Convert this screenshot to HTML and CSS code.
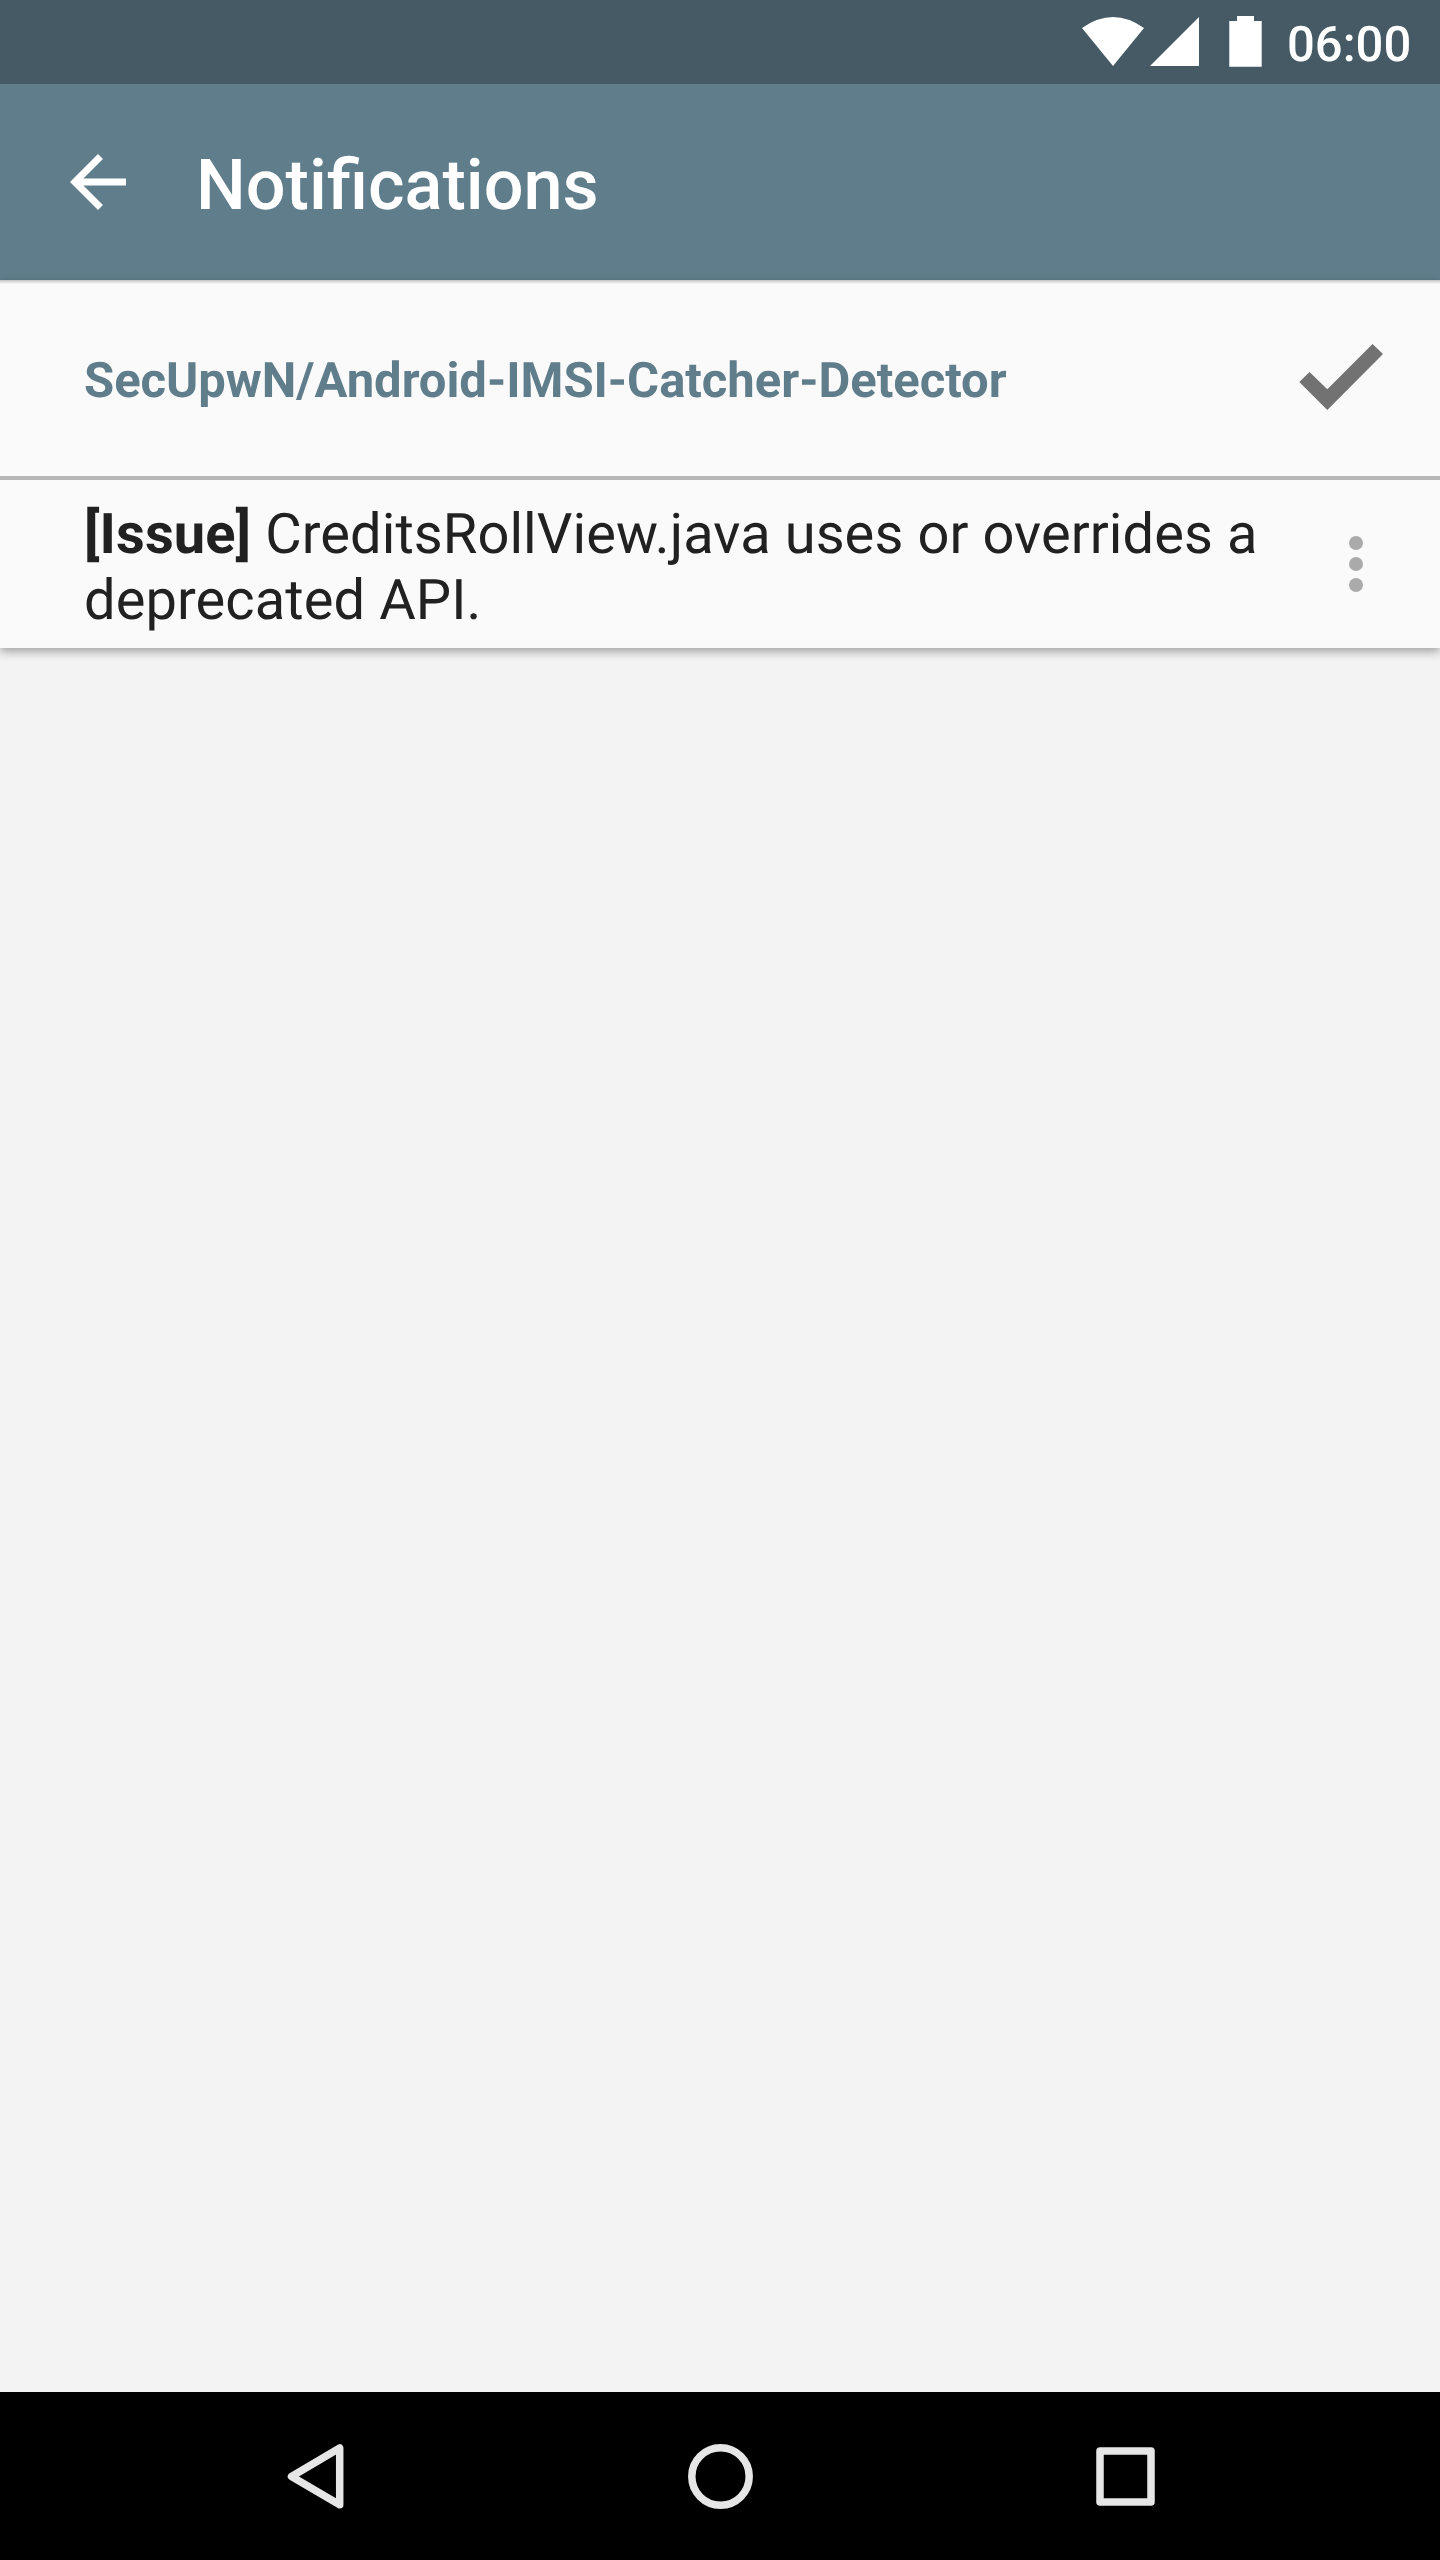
FILE: index.html
```html
<!DOCTYPE html>
<html lang="en"><head><meta charset="utf-8"><title>Notifications</title><link rel="stylesheet" href="styles.css"></head>
<body>
<div class="screen">
<div class="status">
<svg class="status-icons" width="190" height="84" viewBox="1078 0 190 84" fill="#fff"><path d="M1082 28Q1113 6 1144 28L1113 66Z"/><path d="M1150 66H1199V17Z"/><path d="M1229.300 66.700V21H1237V16H1254V21H1261.700V66.700Z"/></svg>
<span class="clock">06:00</span></div>
<header class="appbar">
<svg class="back" width="56" height="56" viewBox="4 4 16 16" fill="#fff"><path d="M20 11H7.830l5.590-5.590L12 4l-8 8 8 8 1.410-1.410L7.830 13H20z"/></svg>
<h1 class="title">Notifications</h1></header>
<main class="content">
<section class="group">
<div class="repo"><span class="repo-name">SecUpwN/Android-IMSI-Catcher-Detector</span>
<svg class="check" width="84" height="66" viewBox="0 0 84 66" fill="#727272"><path d="M0.300 38L10.500 28L28.300 45.300L73.500 0L84 10L28.300 66Z"/></svg></div>
<div class="item"><p class="item-text"><b>[Issue]</b> CreditsRollView.java uses or overrides a deprecated API.</p>
<svg class="more" width="14" height="56" viewBox="0 0 14 56" fill="#aaa"><circle cx="7" cy="7" r="7"/><circle cx="7" cy="28" r="7"/><circle cx="7" cy="49" r="7"/></svg></div>
</section></main>
<nav class="nav"><svg width="1440" height="168" viewBox="0 2392 1440 168" fill="none" stroke="#e6e6e6" stroke-width="7.500" stroke-linejoin="round"><path d="M339.700 2448V2504.800L291.500 2476.400Z"/><circle cx="720.500" cy="2476.500" r="28.700"/><rect x="1100" y="2451" width="51" height="51"/></svg></nav>
</div></body></html>
```
FILE: styles.css
```css
body{margin:0;font-family:Roboto,sans-serif;text-rendering:geometricPrecision}
.screen{width:1440px;height:2560px;display:flex;flex-direction:column;background:#f3f3f3}
.status{height:84px;background:#455a64;display:flex;justify-content:flex-end;color:#fff}
.clock{width:153px;margin-left:19px;font-size:49px;font-weight:500;line-height:90px}
.appbar{height:196px;background:#607d8b;display:flex;align-items:center;color:#fff}
.back{margin-left:70px}
.title{margin:8px 0 0 70px;font-size:70.2px;font-weight:500}
.content{flex:1}
.group{background:linear-gradient(#c4c4c4,#fafafa 4px);box-shadow:0 4px 9px rgba(0,0,0,.32)}
.repo{height:196px;border-bottom:4px solid #b7b7b7;display:flex;align-items:center;justify-content:space-between;padding:0 57px 0 84px}
.repo-name{margin-top:4px;font-size:49px;letter-spacing:-.03px;font-weight:700;color:#607d8b}
.check{margin-bottom:2px}
.item{height:168px;display:flex;align-items:center;justify-content:space-between;padding:0 77px 0 84px}
.item-text{margin:6px 0 0;width:1200px;font-size:56px;letter-spacing:.09px;line-height:66px;color:#212121}
.nav{height:168px;background:#000}
.nav svg{display:block}
```
